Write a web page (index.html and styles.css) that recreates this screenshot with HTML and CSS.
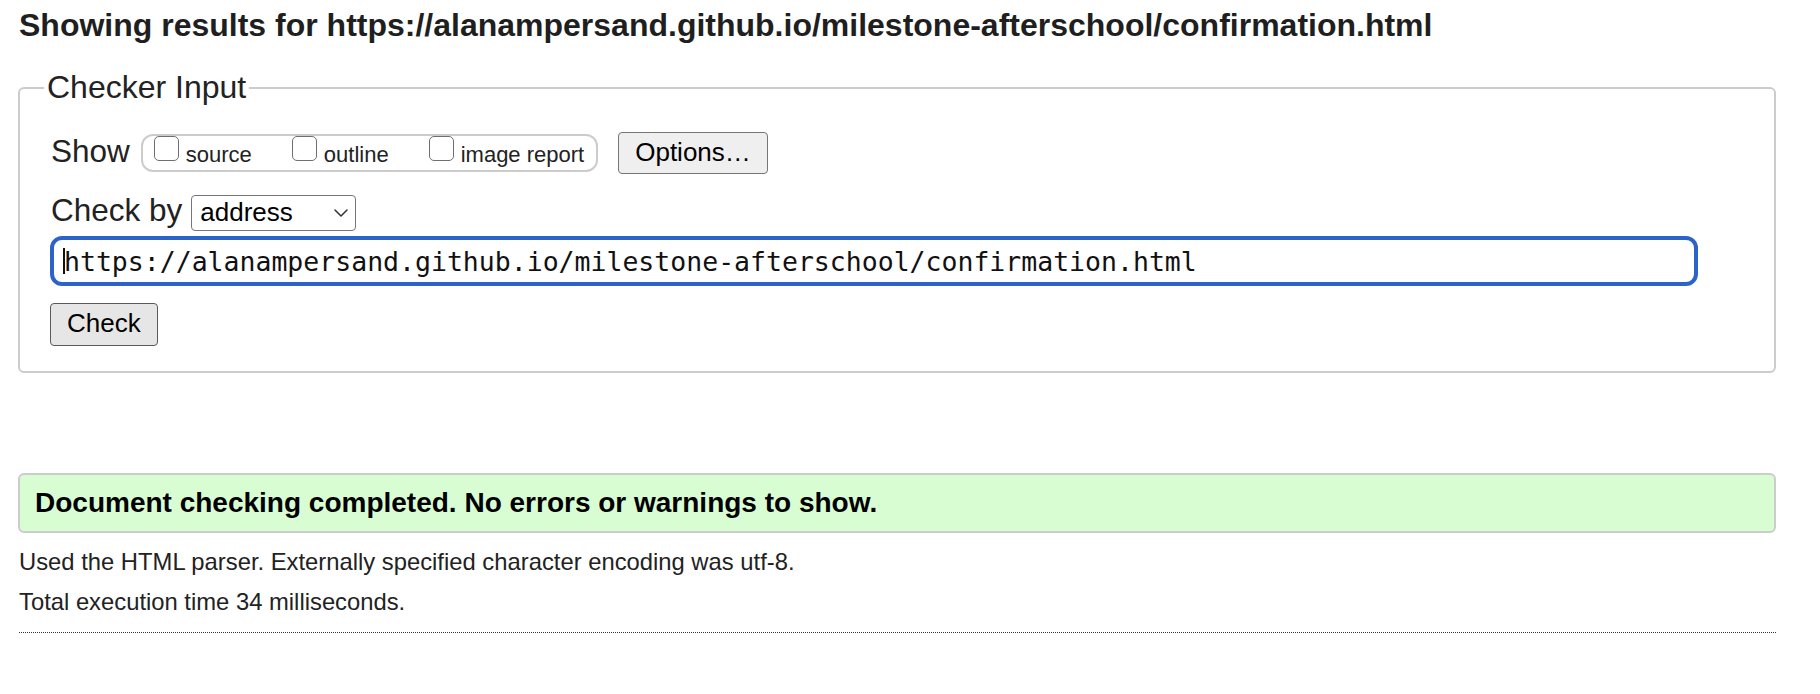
FILE: index.html
```html
<!DOCTYPE html>
<html lang="en">
<head>
<meta charset="utf-8">
<title>Showing results for confirmation.html</title>
<link rel="stylesheet" href="styles.css">
</head>
<body>
<main class="page">
  <h2 class="results-title">Showing results for https://alanampersand.github.io/milestone-afterschool/confirmation.html</h2>

  <fieldset class="checker">
    <legend class="checker-legend">Checker Input</legend>

    <div class="row row-show">
      <span class="big-label lbl-show">Show</span>
      <div class="show-group">
        <label class="opt"><input type="checkbox" class="cb"><span class="opt-text">source</span></label>
        <label class="opt"><input type="checkbox" class="cb"><span class="opt-text">outline</span></label>
        <label class="opt"><input type="checkbox" class="cb"><span class="opt-text">image report</span></label>
      </div>
      <button class="btn btn-options" type="button">Options…</button>
    </div>

    <div class="row row-by">
      <span class="big-label lbl-by">Check by</span>
      <span class="select-wrap">
        <select class="select">
          <option>address</option>
          <option>file upload</option>
          <option>text input</option>
        </select>
        <svg class="chevron" width="14" height="8" viewBox="0 0 14 8" aria-hidden="true"><path d="M1 1 L7 7 L13 1" fill="none" stroke="#333" stroke-width="1.5" stroke-linecap="round" stroke-linejoin="round"/></svg>
      </span>
    </div>

    <div class="row row-url">
      <span class="url-wrap">
        <input class="url" type="text" value="https://alanampersand.github.io/milestone-afterschool/confirmation.html">
        <span class="caret"></span>
      </span>
    </div>

    <div class="row row-submit">
      <button class="btn btn-check" type="button">Check</button>
    </div>
  </fieldset>

  <div class="success">Document checking completed. No errors or warnings to show.</div>

  <p class="info">Used the HTML parser. Externally specified character encoding was utf-8.</p>
  <p class="info">Total execution time 34 milliseconds.</p>

  <hr class="dots">
</main>
</body>
</html>
```

FILE: styles.css
```css
html, body {
  margin: 0;
  padding: 0;
  background: #ffffff;
}

body {
  font-family: "Liberation Sans", Arial, sans-serif;
  color: #222222;
}

.page {
  margin: 0 44px 0 18px;
}

.results-title {
  margin: 7px 0 0 1px;
  font-size: 32px;
  line-height: 36px;
  font-weight: bold;
  color: #1f1f1f;
  white-space: nowrap;
}

.checker {
  margin: 27px 0 0 0;
  padding: 27px 30px 25px 30px;
  border: 2px solid #cccccc;
  border-radius: 6px;
  min-width: 0;
}

.checker-legend {
  font-size: 32px;
  line-height: 35px;
  padding: 0 3px;
  margin-left: -6px;
  color: #222222;
}

.row {
  display: flex;
  align-items: center;
}

.row-show {
  height: 42px;
}

.big-label {
  font-size: 31.5px;
  color: #222222;
  white-space: nowrap;
}

.lbl-show {
  line-height: 34px;
  margin: 0 11px 4px 1px;
}

.show-group {
  box-sizing: border-box;
  height: 38px;
  display: flex;
  align-items: flex-start;
  gap: 40px;
  padding: 0 12px 0 11px;
  border: 2px solid #cccccc;
  border-radius: 12px;
}

.opt {
  display: flex;
  align-items: flex-start;
  gap: 7px;
}

.cb {
  appearance: none;
  -webkit-appearance: none;
  box-sizing: border-box;
  width: 25px;
  height: 25px;
  margin: 0;
  border: 1px solid #6f6f6f;
  border-radius: 5px;
  background: #ffffff;
}

.opt-text {
  font-size: 22px;
  line-height: 37px;
  color: #222222;
  white-space: nowrap;
}

.btn {
  box-sizing: border-box;
  font-family: "Liberation Sans", Arial, sans-serif;
  font-size: 26px;
  color: #000000;
  padding: 0 16px 2px;
  border-radius: 4px;
  cursor: pointer;
}

.btn-options {
  height: 42px;
  margin-left: 20px;
  background: #efefef;
  border: 1px solid #767676;
}

.row-by {
  height: 36px;
  margin-top: 21px;
}

.lbl-by {
  line-height: 30px;
  margin: 0 9px 6px 1px;
}

.select-wrap {
  position: relative;
  display: inline-block;
}

.select {
  appearance: none;
  -webkit-appearance: none;
  box-sizing: border-box;
  width: 165px;
  height: 36px;
  padding: 0 30px 2px 8px;
  font-family: "Liberation Sans", Arial, sans-serif;
  font-size: 26px;
  color: #000000;
  background: #ffffff;
  border: 1px solid #767676;
  border-radius: 4px;
  display: block;
}

.chevron {
  position: absolute;
  right: 8px;
  top: 14px;
  pointer-events: none;
}

.row-url {
  margin-top: 5px;
}

.url-wrap {
  position: relative;
  display: inline-block;
}

.url {
  box-sizing: border-box;
  width: 1648px;
  height: 50px;
  padding: 0 10px;
  font-family: "DejaVu Sans Mono", "Liberation Mono", monospace;
  font-size: 26.5px;
  color: #111111;
  border: 4px solid #2b63c9;
  border-radius: 12px;
  outline: none;
  display: block;
}

.caret {
  position: absolute;
  left: 13px;
  top: 12px;
  width: 2px;
  height: 26px;
  background: #111111;
}

.row-submit {
  margin-top: 17px;
}

.btn-check {
  height: 43px;
  background: #e6e6e6;
  border: 1px solid #5a5a5a;
}

.success {
  box-sizing: border-box;
  height: 60px;
  margin-top: 100px;
  display: flex;
  align-items: center;
  padding: 0 15px;
  background: #d8fdd3;
  border: 2px solid #cccccc;
  border-radius: 6px;
  font-size: 28px;
  font-weight: bold;
  color: #000000;
  white-space: nowrap;
}

.info {
  margin: 16px 0 0 1px;
  font-size: 23.8px;
  line-height: 26px;
  color: #222222;
}

.info + .info {
  margin-top: 14px;
}

.dots {
  margin: 17px 0 0 1px;
  height: 0;
  border: 0;
  border-top: 1px dotted #333333;
}
```
